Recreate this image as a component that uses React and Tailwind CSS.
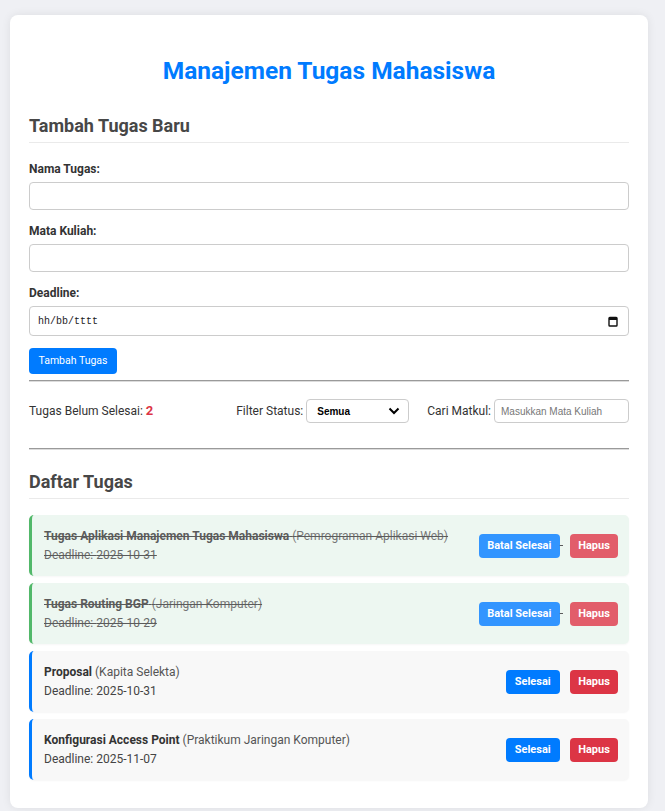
import { useState } from 'react';

const tasks = [
  {
    id: 1,
    name: 'Tugas Aplikasi Manajemen Tugas Mahasiswa',
    course: 'Pemrograman Aplikasi Web',
    deadline: '2025-10-31',
    done: true,
  },
  { id: 2, name: 'Tugas Routing BGP', course: 'Jaringan Komputer', deadline: '2025-10-29', done: true },
  { id: 3, name: 'Proposal', course: 'Kapita Selekta', deadline: '2025-10-31', done: false },
  {
    id: 4,
    name: 'Konfigurasi Access Point',
    course: 'Praktikum Jaringan Komputer',
    deadline: '2025-11-07',
    done: false,
  },
];

const TaskItem = ({ task }) => (
  <li
    className={`flex h-[61px] items-center justify-between rounded-[5px] border-l-[3px] pl-[12px] pr-[11px] shadow-[0_1px_2px_rgba(0,0,0,0.04)] ${
      task.done
        ? 'border-[#28a745] bg-[#e9f6ee] text-[#333] line-through opacity-80'
        : 'border-[#007bff] bg-[#f8f8f8] text-[#333]'
    }`}
  >
    <div className="text-[12px] leading-[16px]">
      <p>
        <span className="font-bold">{task.name}</span>{' '}
        <span className="text-[#555]">({task.course})</span>
      </p>
      <p className="mt-[3px] text-[#444]">Deadline: {task.deadline}</p>
    </div>
    <div className="whitespace-nowrap text-[13px] leading-[24px]">
      <button
        className={`inline-block h-[24px] rounded-[4px] bg-[#007bff] align-top text-[11px] font-bold text-white ${
          task.done ? 'w-[81px]' : 'w-[54px]'
        }`}
      >
        {task.done ? 'Batal Selesai' : 'Selesai'}
      </button>{' '}
      <button className="ml-[7px] inline-block h-[24px] w-[48px] rounded-[4px] bg-[#dc3545] align-top text-[11px] font-bold text-white">
        Hapus
      </button>
    </div>
  </li>
);

const Field = ({ label, children }) => (
  <div className="mb-[13px]">
    <label className="block text-[12px] font-bold leading-[16px] text-[#333]">{label}</label>
    <div className="mt-[5px]">{children}</div>
  </div>
);

export default function App() {
  const [nama, setNama] = useState('');
  const [matkul, setMatkul] = useState('');
  const pending = tasks.filter((t) => !t.done).length;

  return (
    <div className="min-h-screen bg-[#eff0f4] pt-[15px] pb-[20px] font-['Roboto','Liberation_Sans',sans-serif]">
      <div className="ml-[10px] w-[638px] rounded-[8px] bg-white px-[19px] pt-[42px] pb-[28px] shadow-[0_0_10px_rgba(0,0,0,0.08)]">
        <h1 className="text-center text-[24.5px] font-bold leading-[28px] text-[#007bff]">
          Manajemen Tugas Mahasiswa
        </h1>

        <h2 className="mt-[30px] border-b border-[#eaeaea] pb-[5px] text-[18px] font-bold leading-[22px] text-[#474747]">
          Tambah Tugas Baru
        </h2>

        <form className="mt-[18px]" onSubmit={(e) => e.preventDefault()}>
          <Field label="Nama Tugas:">
            <input
              value={nama}
              onChange={(e) => setNama(e.target.value)}
              className="block h-[28px] w-full rounded-[4px] border border-[#ccc] px-2 text-[13px] outline-none"
            />
          </Field>
          <Field label="Mata Kuliah:">
            <input
              value={matkul}
              onChange={(e) => setMatkul(e.target.value)}
              className="block h-[28px] w-full rounded-[4px] border border-[#ccc] px-2 text-[13px] outline-none"
            />
          </Field>
          <div>
            <label className="block text-[12px] font-bold leading-[16px] text-[#333]">Deadline:</label>
            <div className="mt-[5px] flex h-[30px] w-full items-center justify-between rounded-[4px] border border-[#ccc] pl-[8px] pr-[10px]">
              <span className="font-['Liberation_Mono',monospace] text-[10px] text-[#222]">hh/bb/tttt</span>
              <svg width="10" height="11" viewBox="0 0 10 11" fill="none">
                <rect x="1" y="1.5" width="8" height="8.5" rx="0.8" stroke="#111" strokeWidth="1.4" />
                <rect x="1" y="1.5" width="8" height="2.5" fill="#111" />
              </svg>
            </div>
          </div>
          <button
            type="submit"
            className="mt-[12px] h-[26px] w-[88px] rounded-[4px] bg-[#007bff] text-[10.5px] text-white"
          >
            Tambah Tugas
          </button>
        </form>

        <div className="mt-[6px] h-[2px] border-t border-b border-t-[#9a9a9a] border-b-[#dcdcdc]" />

        <div className="mt-[17px] flex h-[24px] items-center justify-between text-[12px] text-[#333]">
          <p>
            Tugas Belum Selesai: <span className="text-[13px] font-bold text-[#dc3545]">{pending}</span>
          </p>
          <div className="flex items-center gap-[18px]">
            <div className="flex items-center gap-[3px]">
              <span>Filter Status:</span>
              <div className="flex h-[24px] w-[103px] items-center justify-between rounded-[4px] border border-[#ccc] pl-[10px] pr-[8px] font-['Liberation_Sans',sans-serif] text-[10px] font-bold text-black">
                <span>Semua</span>
                <svg width="12" height="8" viewBox="0 0 12 8" fill="none">
                  <path d="M1.5 1.5 6 6l4.5-4.5" stroke="#000" strokeWidth="2" />
                </svg>
              </div>
            </div>
            <div className="flex items-center gap-[3px]">
              <span>Cari Matkul:</span>
              <input
                placeholder="Masukkan Mata Kuliah"
                className="h-[24px] w-[135px] rounded-[4px] border border-[#ccc] px-[6px] font-['Liberation_Sans',sans-serif] text-[10px] outline-none placeholder:text-[#777]"
              />
            </div>
          </div>
        </div>

        <div className="mt-[25px] h-[2px] border-t border-b border-t-[#9a9a9a] border-b-[#dcdcdc]" />

        <h2 className="mt-[21px] border-b border-[#eaeaea] pb-[5px] text-[18px] font-bold leading-[22px] text-[#474747]">
          Daftar Tugas
        </h2>

        <ul className="mt-[16px] flex flex-col gap-[7px]">
          {tasks.map((task) => (
            <TaskItem key={task.id} task={task} />
          ))}
        </ul>
      </div>
    </div>
  );
}
